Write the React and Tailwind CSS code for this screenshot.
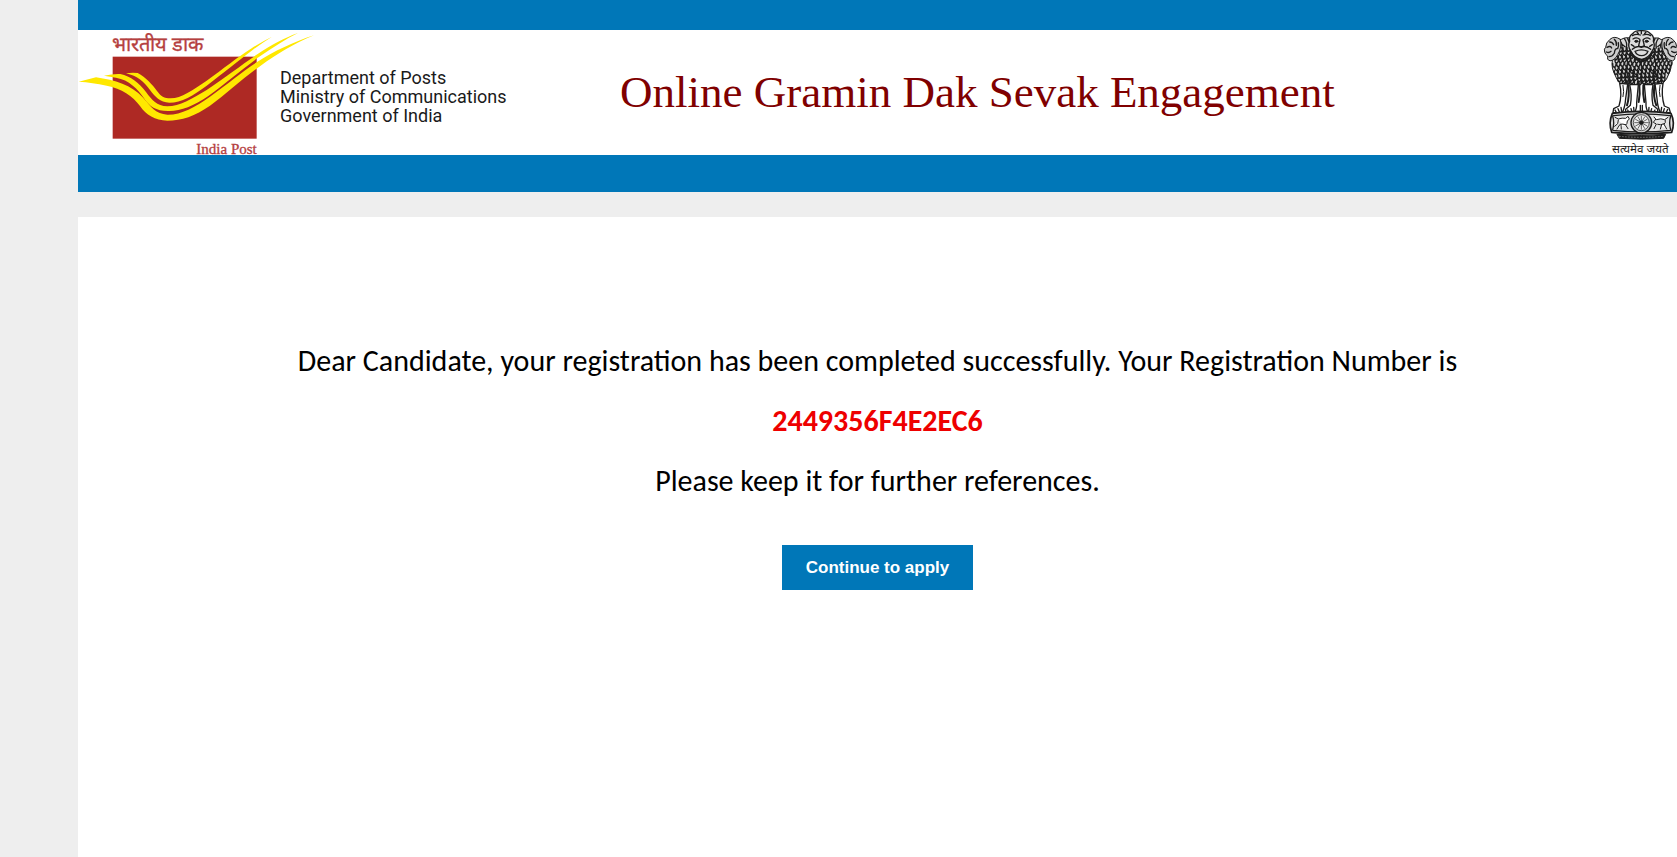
function PostLogo() {
  return (
    <svg
      viewBox="54 90 606 375"
      className="h-[125px] w-[202px] shrink-0 overflow-visible"
      role="img"
      aria-label="India Post"
    >
      <text x="157" y="152" fontSize="60" fill="#b5403f" stroke="#b5403f" strokeWidth="1" className="font-[serif]">
        भारतीय डाक
      </text>
      <rect x="158" y="170" width="432" height="246" fill="#ae2924" />
      <g fill="#ffe800">
        <path d="M56 245 L108 232 C165 240 215 256 248 292 C274 322 287 342 322 344 C362 345 405 322 450 290 C500 255 545 216 590 187 C645 152 700 126 762 106 C700 132 648 164 602 197 C550 234 500 281 450 317 C405 348 365 362 322 362 C285 361 258 345 240 318 C218 288 185 266 140 257 C110 250 85 247 56 245Z" />
        <path d="M132 227 Q158 221 181 222 C212 228 238 250 258 276 C276 300 290 318 322 319 C360 319 395 297 440 270 C495 234 545 194 592 163 C635 134 675 113 714 99 C675 118 640 142 600 169 C550 204 495 252 445 288 C400 318 362 334 324 333 C288 333 268 318 253 296 C232 266 208 240 168 233 Q150 230 132 227Z" />
        <path d="M198 220 Q215 217 233 219 C258 232 277 254 291 273 C303 289 312 295 332 295 C365 294 397 271 440 242 C490 207 532 172 575 145 Q607 124 636 110 Q607 128 577 151 C535 182 490 220 440 257 C400 286 365 308 328 308 C300 307 285 290 270 270 C252 246 233 228 198 220Z" />
      </g>
      <text x="409" y="463" fontSize="45" fill="#b5403f" stroke="#b5403f" strokeWidth="1" className="font-['Liberation_Serif',serif]">
        India Post
      </text>
    </svg>
  );
}

// Rows of the mane: [y, left edge, right edge]
const maneRows = [
  [84, 126, 262],
  [95, 120, 266],
  [106, 112, 274],
  [117, 108, 280],
  [128, 107, 282],
  [139, 108, 280],
  [150, 112, 276],
  [161, 116, 272],
  [172, 122, 266],
  [182, 130, 258],
];

const maneStrokes = maneRows.flatMap(([y, left, right], row) => {
  const strokes = [];
  for (let x = left + (row % 2) * 6; x < right - 6; x += 12) {
    const lift = ((x * 7 + row * 5) % 5) - 2;
    strokes.push(
      x < 187
        ? `M${x} ${y + lift} q-1 9 5 12 q6 -4 5 -12`
        : `M${x} ${y + lift} q-1 8 5 12 q6 -3 5 -12`
    );
  }
  return strokes;
}).join(" ");

const spokes = Array.from({ length: 12 }, (_, i) => {
  const a = (i * Math.PI) / 6;
  return `M193 308 L${193 + 20 * Math.cos(a)} ${308 + 20 * Math.sin(a)}`;
}).join(" ");

function StateEmblem() {
  return (
    <svg
      viewBox="78 30 222 375"
      className="h-[125px] w-[74px] shrink-0 overflow-visible"
      role="img"
      aria-label="State Emblem of India"
      fill="none"
      stroke="#1c1c1c"
      strokeWidth="3"
      strokeLinecap="round"
      strokeLinejoin="round"
    >
      {/* Bodies and manes */}
      <path fill="#d6d6d6" d="M128 62 Q140 50 160 54 L228 54 Q246 50 258 62 Q268 90 278 108 Q288 132 278 156 Q270 180 256 192 L240 186 L218 196 L193 188 L168 196 L148 186 L132 192 Q118 180 110 156 Q100 132 110 108 Q124 92 128 62Z" />
      <path strokeWidth="4" d={maneStrokes} />
      <path strokeWidth="3" d="M152 118 Q146 150 156 190 M234 118 Q240 150 230 190 M193 118 V188" />
      <path strokeWidth="4" d="M128 62 q10 10 6 22 M142 56 q10 12 6 28 M152 56 q8 14 6 26 M258 62 q-10 10 -6 22 M244 56 q-10 12 -6 28 M234 56 q-8 14 -6 26 M134 72 l10 8 M252 72 l-10 8" />
      {/* Side heads */}
      <path fill="#ccc" d="M130 58 Q112 46 99 58 Q86 68 86 82 Q80 86 83 96 Q85 104 92 108 L92 118 Q98 126 108 120 Q118 114 122 104 Q136 82 130 58Z" />
      <path strokeWidth="4" d="M98 66 q8 0 12 8 M90 82 q10 -6 14 2 M88 96 q8 4 14 -2 M96 110 q10 0 14 -8 M112 58 q8 8 6 18 M118 86 q-6 4 -6 14 M124 68 q2 10 -2 18" />
      <path fill="#ccc" d="M256 58 Q274 46 287 58 Q299 68 299 80 L304 88 L300 102 L294 108 L293 118 Q288 126 278 120 Q268 114 264 104 Q250 82 256 58Z" />
      <path strokeWidth="4" d="M288 66 q-8 0 -12 8 M296 82 q-10 -6 -14 2 M298 96 q-8 4 -14 -2 M290 110 q-10 0 -14 -8 M274 58 q-8 8 -6 18 M268 86 q6 4 6 14 M262 68 q-2 10 2 18" />
      {/* Front head */}
      <path fill="#ddd" strokeWidth="4" d="M168 40 Q174 31 193 32 Q212 31 219 40 Q233 48 229 64 Q236 80 226 92 Q216 114 194 118 Q170 114 161 92 Q151 80 158 64 Q154 48 168 40Z" />
      <path strokeWidth="4" d="M166 47 q12 -7 24 -2 M198 45 q12 -5 23 2 M168 57 q11 -7 20 1 M200 58 q9 -8 19 -1 M189 60 l-4 17 q8 6 17 0 l-4 -17 M166 88 q14 -13 27 -6 q13 -7 28 6 M174 94 q19 -9 39 0 q-5 13 -19 13 q-15 0 -20 -13Z M163 74 l8 5 M226 74 l-8 5 M180 36 l4 5 M207 36 l-4 5 M193 34 v7" />
      <ellipse cx="178" cy="64" rx="5" ry="3" fill="#1c1c1c" />
      <ellipse cx="209" cy="64" rx="5" ry="3" fill="#1c1c1c" />
      <path strokeWidth="5" d="M163 98 Q176 123 194 124 Q214 123 226 98" />
      {/* Legs and paws */}
      <path fill="#fff" strokeWidth="4" d="M128 190 Q136 225 126 258 L110 266 L108 277 L136 278 Q144 262 146 236 L152 192Z M258 190 Q252 225 262 258 L276 264 L280 277 L250 278 Q242 262 240 236 L234 192Z" />
      <path fill="#fff" strokeWidth="4" d="M158 194 Q166 226 160 256 L146 268 L146 279 L172 278 Q180 266 179 248 L184 194Z M228 194 Q222 226 228 256 L242 268 L242 279 L214 278 Q206 266 207 248 L202 194Z" />
      <path strokeWidth="6" d="M154 196 Q158 230 150 256 M232 196 Q228 230 238 256 M187 196 Q190 220 185 246 M199 196 Q197 220 202 246" />
      <path strokeWidth="3" d="M138 196 q4 20 0 34 M249 196 q-4 20 0 34" />
      <path strokeWidth="4" d="M114 270 l4 7 M123 266 l4 10 M132 262 l2 12 M152 270 l4 8 M162 266 l3 11 M170 262 l1 12 M234 270 l-4 8 M224 266 l-3 11 M216 262 l-1 12 M272 268 l-4 9 M262 266 l-3 10 M254 262 l-2 12 M190 256 v18 M196 256 v18" />
      {/* Abacus */}
      <path fill="#e4e4e4" strokeWidth="5" d="M106 280 Q193 268 282 280 Q295 308 284 337 Q193 346 104 337 Q94 308 106 280Z" />
      <path strokeWidth="4" d="M110 287 Q193 276 280 287 M108 331 Q193 341 280 331 M107 288 q6 20 0 42 M281 288 q-6 20 0 42" />
      <path fill="#fff" strokeWidth="3" d="M114 292 l10 5 q12 -4 22 -2 l7 -6 l4 8 l-6 6 q0 9 -5 12 l7 11 M146 314 q-9 -3 -17 -1 l-9 14 M124 300 l-2 11 l-9 8 M132 315 l1 12" />
      <path fill="#fff" strokeWidth="3" d="M231 291 l7 8 q14 -5 25 0 l10 -7 M236 298 l-7 9 l9 5 l-7 14 M242 313 q10 4 18 -2 l9 16 M265 301 q2 8 -4 12 M254 314 l-4 13" />
      <circle cx="193" cy="308" r="31" fill="#ccc" strokeWidth="4" />
      <circle cx="193" cy="308" r="24" fill="#eee" strokeWidth="3" stroke="#555" />
      <path strokeWidth="2" d={spokes} />
      <circle cx="193" cy="308" r="5" fill="#1c1c1c" />
      {/* Base */}
      <path fill="#1c1c1c" d="M121 343 Q193 350 266 343 L260 355 Q193 360 128 355Z" />
      <path stroke="#999" strokeWidth="2" strokeDasharray="3 6" d="M127 349 Q193 355 260 349" />
      <text x="105" y="400" fontSize="35" fill="#1c1c1c" stroke="none" className="font-['Noto_Sans',sans-serif]">
        सत्यमेव जयते
      </text>
    </svg>
  );
}

export default function App() {
  return (
    <div className="flex min-h-screen flex-col bg-[#eeeeee] pl-[78px]">
      <header className="border-t-[30px] border-b-[37px] border-[#0077b8] bg-white">
        <div className="flex items-center">
          <PostLogo />
          <p className="w-[340px] shrink-0 pt-2 font-['Roboto',sans-serif] text-[18px] leading-[19px] text-[#1a1a1a]">
            Department of Posts
            <br />
            Ministry of Communications
            <br />
            Government of India
          </p>
          <h1 className="mr-auto font-['Liberation_Serif',serif] text-[45px] leading-none whitespace-nowrap text-[#800000]">
            Online Gramin Dak Sevak Engagement
          </h1>
          <StateEmblem />
        </div>
      </header>

      <main className="mt-[25px] flex grow flex-col items-center bg-white pt-[114px] text-center font-['Carlito','Lato',sans-serif] text-[30px] leading-[60px] text-black">
        <p>
          Dear Candidate, your registration has been completed successfully. Your Registration Number is
        </p>
        <p className="font-bold text-[#ee0000]">2449356F4E2EC6</p>
        <p>Please keep it for further references.</p>
        <button
          type="button"
          className="mt-[34px] h-[45px] cursor-pointer bg-[#0077b8] px-6 font-['Liberation_Sans',sans-serif] text-[17px] leading-none font-bold text-white"
        >
          Continue to apply
        </button>
      </main>
    </div>
  );
}
